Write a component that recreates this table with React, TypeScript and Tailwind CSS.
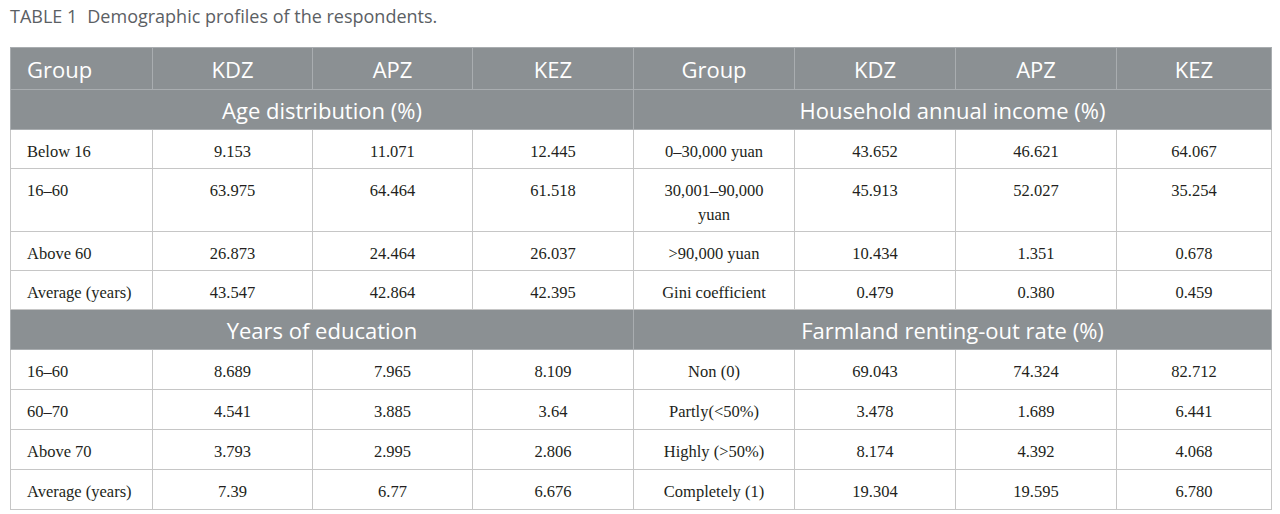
const serif = "font-['Liberation_Serif','Times_New_Roman',serif]"
const sans = "font-['Open_Sans','Noto_Sans',sans-serif]"

type Row = { label: React.ReactNode; kdz: string; apz: string; kez: string }

interface Block {
    left: { title: string; rows: Row[] }
    right: { title: string; rows: Row[] }
}

const blocks: Block[] = [
    {
        left: {
            title: "Age distribution (%)",
            rows: [
                { label: "Below 16", kdz: "9.153", apz: "11.071", kez: "12.445" },
                { label: "16–60", kdz: "63.975", apz: "64.464", kez: "61.518" },
                { label: "Above 60", kdz: "26.873", apz: "24.464", kez: "26.037" },
                { label: "Average (years)", kdz: "43.547", apz: "42.864", kez: "42.395" },
            ],
        },
        right: {
            title: "Household annual income (%)",
            rows: [
                { label: "0–30,000 yuan", kdz: "43.652", apz: "46.621", kez: "64.067" },
                { label: <>30,001–90,000<br />yuan</>, kdz: "45.913", apz: "52.027", kez: "35.254" },
                { label: ">90,000 yuan", kdz: "10.434", apz: "1.351", kez: "0.678" },
                { label: "Gini coefficient", kdz: "0.479", apz: "0.380", kez: "0.459" },
            ],
        },
    },
    {
        left: {
            title: "Years of education",
            rows: [
                { label: "16–60", kdz: "8.689", apz: "7.965", kez: "8.109" },
                { label: "60–70", kdz: "4.541", apz: "3.885", kez: "3.64" },
                { label: "Above 70", kdz: "3.793", apz: "2.995", kez: "2.806" },
                { label: "Average (years)", kdz: "7.39", apz: "6.77", kez: "6.676" },
            ],
        },
        right: {
            title: "Farmland renting-out rate (%)",
            rows: [
                { label: "Non (0)", kdz: "69.043", apz: "74.324", kez: "82.712" },
                { label: "Partly(<50%)", kdz: "3.478", apz: "1.689", kez: "6.441" },
                { label: "Highly (>50%)", kdz: "8.174", apz: "4.392", kez: "4.068" },
                { label: "Completely (1)", kdz: "19.304", apz: "19.595", kez: "6.780" },
            ],
        },
    },
]

const headCell = `bg-[#8b9093] text-white ${sans} text-[22px] font-normal leading-[30px] border border-[#a9adb0] h-[42px] px-4`
const sectionCell = `bg-[#8b9093] text-white ${sans} text-[22px] font-normal leading-[30px] border border-[#a9adb0] h-[40px] text-center`

export default function App() {
    return <div className="min-h-screen bg-white px-[10px] pt-[5px] text-[#231f20]">
        <div className={`${sans} text-[18px] leading-[22px] text-[#5b6064] flex gap-[10px] mb-[20px]`}>
            <span>TABLE 1</span>
            <span>Demographic profiles of the respondents.</span>
        </div>
        <table className={`w-[1261px] table-fixed border-collapse ${serif} text-[16.5px]`}>
            <colgroup>
                <col className="w-[142px]" />
                <col className="w-[160px]" />
                <col className="w-[160px]" />
                <col className="w-[161px]" />
                <col className="w-[161px]" />
                <col className="w-[161px]" />
                <col className="w-[161px]" />
                <col className="w-[155px]" />
            </colgroup>
            <thead>
                <tr>
                    <th className={`${headCell} text-left`}>Group</th>
                    <th className={`${headCell} text-center`}>KDZ</th>
                    <th className={`${headCell} text-center`}>APZ</th>
                    <th className={`${headCell} text-center`}>KEZ</th>
                    <th className={`${headCell} text-center`}>Group</th>
                    <th className={`${headCell} text-center`}>KDZ</th>
                    <th className={`${headCell} text-center`}>APZ</th>
                    <th className={`${headCell} text-center`}>KEZ</th>
                </tr>
            </thead>
            <tbody>
                {blocks.map((b, bi) => <BlockRows key={bi} block={b} tall={bi > 0} />)}
            </tbody>
        </table>
    </div>
}

const BlockRows = ({ block, tall }: { block: Block; tall: boolean }) => {
    const { left, right } = block
    // second block's rows are a pixel taller in the source
    const cell = `border border-[#c6c6c6] px-4 pt-[10px] leading-6 align-top text-center ${tall ? 'pb-[5px]' : 'pb-[4px]'}`
    return <>
        <tr>
            <td colSpan={4} className={sectionCell}>{left.title}</td>
            <td colSpan={4} className={sectionCell}>{right.title}</td>
        </tr>
        {left.rows.map((l, i) => {
            const r = right.rows[i]
            return <tr key={i}>
                <td className={`${cell} !text-left`}>{l.label}</td>
                <td className={cell}>{l.kdz}</td>
                <td className={cell}>{l.apz}</td>
                <td className={cell}>{l.kez}</td>
                <td className={cell}>{r.label}</td>
                <td className={cell}>{r.kdz}</td>
                <td className={cell}>{r.apz}</td>
                <td className={cell}>{r.kez}</td>
            </tr>
        })}
    </>
}
